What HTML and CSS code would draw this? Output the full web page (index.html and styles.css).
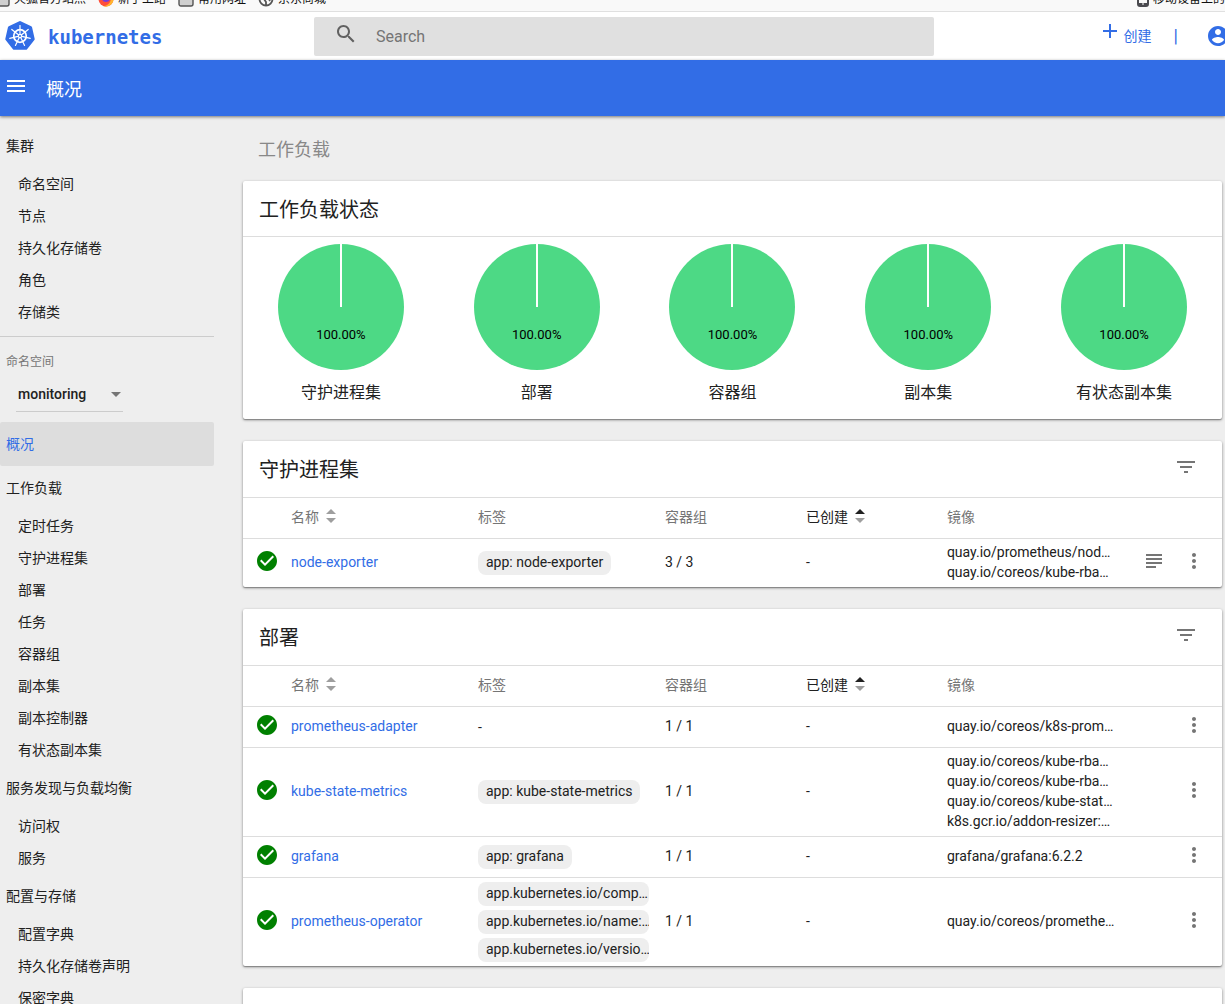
FILE: index.html
```html
<!DOCTYPE html>
<html lang="zh-CN">
<head>
<meta charset="utf-8">
<title>概况 - Kubernetes Dashboard</title>
<link rel="stylesheet" href="styles.css">
</head>
<body>
<svg class="defs" aria-hidden="true">
  <symbol id="i-check" viewBox="0 0 24 24"><path d="M12 2C6.48 2 2 6.48 2 12s4.48 10 10 10 10-4.48 10-10S17.52 2 12 2zm-2 15l-5-5 1.41-1.41L10 14.17l7.59-7.59L19 8l-9 9z"/></symbol>
  <symbol id="i-more" viewBox="0 0 24 24"><path d="M12 8c1.1 0 2-.9 2-2s-.9-2-2-2-2 .9-2 2 .9 2 2 2zm0 2c-1.1 0-2 .9-2 2s.9 2 2 2 2-.9 2-2-.9-2-2-2zm0 6c-1.1 0-2 .9-2 2s.9 2 2 2 2-.9 2-2-.9-2-2-2z"/></symbol>
  <symbol id="i-subject" viewBox="0 0 24 24"><path d="M14 17H4v2h10v-2zm6-8H4v2h16V9zM4 15h16v-2H4v2zM4 5v2h16V5H4z"/></symbol>
  <symbol id="i-filter" viewBox="0 0 24 24"><path d="M10 18h4v-2h-4v2zM3 6v2h18V6H3zm3 7h12v-2H6v2z"/></symbol>
  <symbol id="i-sort" viewBox="0 0 10 14"><path class="sort-up" d="M0 5l5-5 5 5z"/><path d="M0 9h10l-5 5z"/></symbol>
  <symbol id="i-folder" viewBox="0 0 16 16"><path d="M1 4a2 2 0 0 1 2-2h4l1 2h5a2 2 0 0 1 2 2v7a2 2 0 0 1-2 2H3a2 2 0 0 1-2-2z" fill="#d0d0d0" stroke="#555" stroke-width="1.4"/></symbol>
</svg>

<div class="bookmarks">
  <a href="#"><svg class="bm-icon"><use href="#i-folder"/></svg>火狐官方站点</a>
  <a href="#"><svg class="bm-icon" viewBox="0 0 16 16"><circle cx="8" cy="8" r="7.5" fill="#ff4f3a"/><path d="M15.500 8A7.500 7.500 0 0 1 5 15c4 0 7-2 8-7z" fill="#ffb52e"/><circle cx="8" cy="7" r="4" fill="#7a3bd8"/></svg>新手上路</a>
  <a href="#"><svg class="bm-icon"><use href="#i-folder"/></svg>常用网址</a>
  <a href="#"><svg class="bm-icon" viewBox="0 0 16 16" fill="none" stroke="#555" stroke-width="1.800"><circle cx="8" cy="8" r="6.500"/><path d="M2 8h4l2 3v3M14 6h-4l2 4"/></svg>京东商城</a>
  <a href="#" class="bm-mobile"><svg class="bm-icon" viewBox="0 0 16 16"><rect x="3" y="1" width="10" height="14" rx="2" fill="none" stroke="#4a4a4f" stroke-width="2"/><path d="M3 12h10v2H3z" fill="#4a4a4f"/><path d="M7 12.500h2v1H7z" fill="#fff"/></svg>移动设备上的书签</a>
</div>

<header class="topbar">
  <a href="#" class="brand">
    <svg class="brand-logo" viewBox="-16 -16 32 32">
      <path d="M0-13.500L10.600-8.400 13.200 3 5.900 12.200H-5.900L-13.200 3-10.600-8.400z" fill="#326de6" stroke="#326de6" stroke-width="3" stroke-linejoin="round"/>
      <g fill="none" stroke="#fff">
        <circle r="6.300" stroke-width="1.700"/>
        <g stroke-width="1.200" stroke-linecap="round">
          <path d="M0-2V-10.500"/><path d="M0-2V-10.500" transform="rotate(51.430)"/><path d="M0-2V-10.500" transform="rotate(102.860)"/><path d="M0-2V-10.500" transform="rotate(154.290)"/><path d="M0-2V-10.500" transform="rotate(205.710)"/><path d="M0-2V-10.500" transform="rotate(257.140)"/><path d="M0-2V-10.500" transform="rotate(308.570)"/>
        </g>
        <circle r="1.600" stroke-width="1.200"/>
      </g>
    </svg>
    <span class="brand-name">kubernetes</span>
  </a>
  <form class="search" role="search">
    <svg class="icon" viewBox="0 0 24 24"><path d="M15.500 14h-.79l-.28-.27C15.410 12.590 16 11.110 16 9.500 16 5.910 13.090 3 9.500 3S3 5.910 3 9.500 5.910 16 9.500 16c1.610 0 3.090-.59 4.230-1.570l.27.28v.79l5 4.990L20.490 19l-4.990-5zm-6 0C7.010 14 5 11.990 5 9.500S7.010 5 9.500 5 14 7.010 14 9.500 11.990 14 9.500 14z"/></svg>
    <input type="search" placeholder="Search" aria-label="Search">
  </form>
  <div class="top-actions">
    <button type="button" class="create"><svg class="icon" viewBox="0 0 24 24"><path d="M19 13h-6v6h-2v-6H5v-2h6V5h2v6h6v2z"/></svg><span>创建</span></button>
    <span class="sep">|</span>
    <button type="button" class="account" aria-label="Account"><svg class="icon" viewBox="0 0 24 24"><path d="M12 2C6.480 2 2 6.480 2 12s4.480 10 10 10 10-4.480 10-10S17.520 2 12 2zm0 3c1.660 0 3 1.340 3 3s-1.340 3-3 3-3-1.340-3-3 1.340-3 3-3zm0 14.200c-2.500 0-4.710-1.280-6-3.220.03-1.990 4-3.080 6-3.080 1.990 0 5.970 1.090 6 3.080-1.290 1.940-3.500 3.220-6 3.220z"/></svg></button>
  </div>
</header>

<div class="actionbar">
  <button type="button" aria-label="Menu"><svg class="icon" viewBox="0 0 24 24"><path d="M3 18h18v-2H3v2zm0-5h18v-2H3v2zm0-7v2h18V6H3z"/></svg></button>
  <h1>概况</h1>
</div>

<div class="layout">
  <nav class="sidebar">
    <a href="#" class="group">集群</a>
    <a href="#" class="item">命名空间</a>
    <a href="#" class="item">节点</a>
    <a href="#" class="item">持久化存储卷</a>
    <a href="#" class="item">角色</a>
    <a href="#" class="item">存储类</a>
    <div class="namespace">
      <label for="ns">命名空间</label>
      <div class="select-wrap">
        <select id="ns"><option>monitoring</option></select>
      </div>
    </div>
    <a href="#" class="group active">概况</a>
    <a href="#" class="group">工作负载</a>
    <a href="#" class="item">定时任务</a>
    <a href="#" class="item">守护进程集</a>
    <a href="#" class="item">部署</a>
    <a href="#" class="item">任务</a>
    <a href="#" class="item">容器组</a>
    <a href="#" class="item">副本集</a>
    <a href="#" class="item">副本控制器</a>
    <a href="#" class="item">有状态副本集</a>
    <a href="#" class="group">服务发现与负载均衡</a>
    <a href="#" class="item">访问权</a>
    <a href="#" class="item">服务</a>
    <a href="#" class="group">配置与存储</a>
    <a href="#" class="item">配置字典</a>
    <a href="#" class="item">持久化存储卷声明</a>
    <a href="#" class="item">保密字典</a>
  </nav>

  <main class="content">
    <h2 class="section-title">工作负载</h2>

    <section class="card">
      <header class="card-head ruled"><h3>工作负载状态</h3></header>
      <div class="charts">
        <figure><div class="pie"><span>100.00%</span></div><figcaption>守护进程集</figcaption></figure>
        <figure><div class="pie"><span>100.00%</span></div><figcaption>部署</figcaption></figure>
        <figure><div class="pie"><span>100.00%</span></div><figcaption>容器组</figcaption></figure>
        <figure><div class="pie"><span>100.00%</span></div><figcaption>副本集</figcaption></figure>
        <figure><div class="pie"><span>100.00%</span></div><figcaption>有状态副本集</figcaption></figure>
      </div>
    </section>

    <section class="card">
      <header class="card-head"><h3>守护进程集</h3><button type="button" class="filter" aria-label="Filter"><svg class="icon"><use href="#i-filter"/></svg></button></header>
      <table>
        <colgroup><col class="c-icon"><col class="c-wide"><col class="c-wide"><col class="c-mid"><col class="c-mid"><col class="c-wide"><col></colgroup>
        <thead><tr><th></th><th><button type="button" class="sort">名称<svg><use href="#i-sort"/></svg></button></th><th>标签</th><th>容器组</th><th><button type="button" class="sort sorted">已创建<svg><use href="#i-sort"/></svg></button></th><th>镜像</th><th></th></tr></thead>
        <tbody>
          <tr>
            <td class="status"><svg class="icon"><use href="#i-check"/></svg></td>
            <td><a href="#">node-exporter</a></td>
            <td class="labels"><div class="chips"><span>app: node-exporter</span></div></td>
            <td>3 / 3</td><td>-</td>
            <td><div class="image">quay.io/prometheus/nod…</div><div class="image">quay.io/coreos/kube-rba…</div></td>
            <td><div class="actions"><button type="button" aria-label="Logs"><svg class="icon"><use href="#i-subject"/></svg></button><button type="button" aria-label="More"><svg class="icon"><use href="#i-more"/></svg></button></div></td>
          </tr>
        </tbody>
      </table>
    </section>

    <section class="card">
      <header class="card-head"><h3>部署</h3><button type="button" class="filter" aria-label="Filter"><svg class="icon"><use href="#i-filter"/></svg></button></header>
      <table>
        <colgroup><col class="c-icon"><col class="c-wide"><col class="c-wide"><col class="c-mid"><col class="c-mid"><col class="c-wide"><col></colgroup>
        <thead><tr><th></th><th><button type="button" class="sort">名称<svg><use href="#i-sort"/></svg></button></th><th>标签</th><th>容器组</th><th><button type="button" class="sort sorted">已创建<svg><use href="#i-sort"/></svg></button></th><th>镜像</th><th></th></tr></thead>
        <tbody>
          <tr>
            <td class="status"><svg class="icon"><use href="#i-check"/></svg></td>
            <td><a href="#">prometheus-adapter</a></td>
            <td class="labels">-</td>
            <td>1 / 1</td><td>-</td>
            <td><div class="image">quay.io/coreos/k8s-prom…</div></td>
            <td><div class="actions"><button type="button" aria-label="More"><svg class="icon"><use href="#i-more"/></svg></button></div></td>
          </tr>
          <tr>
            <td class="status"><svg class="icon"><use href="#i-check"/></svg></td>
            <td><a href="#">kube-state-metrics</a></td>
            <td class="labels"><div class="chips"><span>app: kube-state-metrics</span></div></td>
            <td>1 / 1</td><td>-</td>
            <td><div class="image">quay.io/coreos/kube-rba…</div><div class="image">quay.io/coreos/kube-rba…</div><div class="image">quay.io/coreos/kube-stat…</div><div class="image">k8s.gcr.io/addon-resizer:…</div></td>
            <td><div class="actions"><button type="button" aria-label="More"><svg class="icon"><use href="#i-more"/></svg></button></div></td>
          </tr>
          <tr>
            <td class="status"><svg class="icon"><use href="#i-check"/></svg></td>
            <td><a href="#">grafana</a></td>
            <td class="labels"><div class="chips"><span>app: grafana</span></div></td>
            <td>1 / 1</td><td>-</td>
            <td><div class="image">grafana/grafana:6.2.2</div></td>
            <td><div class="actions"><button type="button" aria-label="More"><svg class="icon"><use href="#i-more"/></svg></button></div></td>
          </tr>
          <tr>
            <td class="status"><svg class="icon"><use href="#i-check"/></svg></td>
            <td><a href="#">prometheus-operator</a></td>
            <td class="labels"><div class="chips"><span>app.kubernetes.io/comp…</span><span>app.kubernetes.io/name:…</span><span>app.kubernetes.io/versio…</span></div></td>
            <td>1 / 1</td><td>-</td>
            <td><div class="image">quay.io/coreos/promethe…</div></td>
            <td><div class="actions"><button type="button" aria-label="More"><svg class="icon"><use href="#i-more"/></svg></button></div></td>
          </tr>
        </tbody>
      </table>
    </section>

    <section class="card"><header class="card-head"></header></section>
  </main>
</div>
</body>
</html>
```

FILE: styles.css
```css
* { box-sizing: border-box; }

html, body { height: 100%; }

body {
  margin: 0;
  display: flex;
  flex-direction: column;
  overflow: hidden;
  background: #eee;
  color: #212121;
  font: 14px/20px Roboto, "Noto Sans CJK SC", sans-serif;
}

a { color: inherit; text-decoration: none; }

button {
  display: flex;
  align-items: center;
  margin: 0;
  padding: 0;
  border: 0;
  background: none;
  color: inherit;
  font: inherit;
  cursor: pointer;
}

h1, h2, h3, figure { margin: 0; font-weight: 400; }

.defs { position: absolute; width: 0; height: 0; }

.icon { display: block; width: 24px; height: 24px; flex: none; fill: currentColor; }

/* Bookmarks strip, scrolled so that only its lower edge shows */
.bookmarks {
  flex: none;
  display: flex;
  align-items: flex-end;
  gap: 12px;
  height: 12px;
  padding-bottom: 4px;
  overflow: hidden;
  border-bottom: 1px solid #e0e0e0;
  background: #f9f9f9;
  color: #111;
  font-size: 12px;
  line-height: 16px;
}
.bookmarks a { display: flex; gap: 4px; white-space: nowrap; }
.bookmarks a:first-child { margin-left: -6px; }
.bm-icon { width: 16px; height: 16px; flex: none; }
.bookmarks .bm-mobile { margin-left: auto; margin-right: -24px; gap: 2px; }

.topbar {
  flex: none;
  display: flex;
  align-items: center;
  height: 48px;
  background: #fff;
}
.brand {
  display: flex;
  align-items: center;
  gap: 12px;
  width: 314px;
  padding-left: 4px;
  color: #326de6;
}
.brand-logo { width: 32px; height: 32px; }
.brand-name { padding-top: 2px; font: bold 19px/24px "DejaVu Sans Mono", monospace; }

.search {
  display: flex;
  flex: 1;
  max-width: 620px;
  height: 39px;
  padding: 5px 20px 0;
  border-radius: 2px;
  background: #e0e0e0;
  color: #616161;
}
.search input {
  flex: 1;
  height: 30px;
  margin-left: 18px;
  padding: 0;
  border: 0;
  outline: 0;
  background: none;
  font: 16px/30px Roboto, "Noto Sans CJK SC", sans-serif;
}
.search input::placeholder { color: #757575; opacity: 1; }

.top-actions {
  display: flex;
  align-items: center;
  margin-left: auto;
  margin-right: -5px;
  color: #326de6;
}
.create { gap: 2px; }
.create .icon { margin-bottom: 10px; }
.sep { margin: 0 28px 0 22px; font-size: 18px; }

.actionbar {
  flex: none;
  display: flex;
  align-items: center;
  gap: 18px;
  height: 56px;
  padding-left: 4px;
  background: #326de6;
  color: #fff;
  box-shadow: 0 1px 3px rgba(0, 0, 0, .5);
  z-index: 1;
}
.actionbar button { padding-bottom: 4px; }
.actionbar h1 { padding-top: 4px; font-size: 18px; line-height: 24px; }

.layout { display: flex; flex: 1; min-height: 0; }

.sidebar { flex: none; width: 214px; padding-top: 8px; }
.group { display: block; padding-left: 6px; line-height: 44px; }
.item { display: block; padding-left: 18px; line-height: 32px; }
.active { border-radius: 2px; background: #ddd; color: #326de6; }

.namespace {
  margin-top: 8px;
  padding: 17px 0 10px 16px;
  border-top: 1px solid #ccc;
}
.namespace label {
  display: block;
  margin-left: -10px;
  color: #757575;
  font-size: 12px;
  line-height: 16px;
}
.select-wrap {
  display: flex;
  align-items: center;
  width: 107px;
  height: 42px;
  padding-top: 7px;
  border-bottom: 1px solid #ccc;
}
.select-wrap select {
  flex: 1;
  height: 32px;
  padding: 0 0 0 2px;
  border: 0;
  appearance: none;
  background: none;
  color: inherit;
  font: 500 14px/20px Roboto, sans-serif;
}
.select-wrap::after {
  content: "";
  margin-right: 2px;
  border: 5px solid transparent;
  border-top-color: #757575;
  border-bottom: 0;
}

.content {
  flex: 1;
  min-width: 0;
  display: flex;
  flex-direction: column;
  gap: 22px;
  padding: 22px 3px 0 29px;
}
.section-title {
  padding: 2px 0 0 15px;
  color: #888;
  font-size: 18px;
  line-height: 19px;
}

.card {
  flex: none;
  border-radius: 2px;
  background: #fff;
  box-shadow: 0 1px 3px rgba(0, 0, 0, .4), 0 1px 1px rgba(0, 0, 0, .24);
}
.card-head {
  display: flex;
  align-items: center;
  justify-content: space-between;
  height: 56px;
  padding: 0 24px 0 16px;
}
.card-head.ruled { border-bottom: 1px solid #ddd; }
.card-head h3 { padding-top: 2px; font-size: 20px; line-height: 28px; }
.filter { padding-bottom: 4px; color: #757575; }

.charts { display: flex; padding: 7px 0 14px; }
.charts figure { flex: 1; display: flex; flex-direction: column; align-items: center; }
.pie {
  display: flex;
  justify-content: center;
  width: 126px;
  height: 126px;
  border-radius: 50%;
  background: linear-gradient(#fff, #fff) top center / 2px 63px no-repeat, #4dd985;
}
.pie span { padding-top: 81px; color: #000; font-size: 13px; }
.charts figcaption { padding-top: 11px; font-size: 16px; line-height: 24px; }

table { width: 100%; border-collapse: separate; border-spacing: 0; table-layout: fixed; }
.c-icon { width: 48px; }
.c-wide { width: 19.1%; }
.c-mid { width: 14.4%; }
th, td { padding: 0 16px 0 0; border-top: 1px solid #ddd; text-align: left; white-space: nowrap; }
th { height: 41px; padding-bottom: 2px; color: #757575; font-weight: 400; }
td { height: 41px; padding-top: 3px; padding-bottom: 5px; }
td a { color: #326de6; }
td.labels { padding-top: 4px; padding-bottom: 4px; }
.status { padding-left: 12px; padding-bottom: 7px; color: #008000; }

.sort svg { width: 10px; height: 14px; margin: 0 0 2px 7px; fill: #9e9e9e; }
.sort-up { fill: var(--sort-up, #9e9e9e); }
.sorted { --sort-up: #212121; color: #212121; }

.chips { display: flex; flex-direction: column; align-items: flex-start; gap: 4px; }
.chips span {
  max-width: 100%;
  padding: 0 8px 2px;
  overflow: hidden;
  border-radius: 8px;
  background: #eee;
  line-height: 22px;
}
.image { overflow: hidden; text-overflow: ellipsis; }

.actions { display: flex; justify-content: flex-end; gap: 16px; padding-bottom: 2px; color: #757575; }
```
